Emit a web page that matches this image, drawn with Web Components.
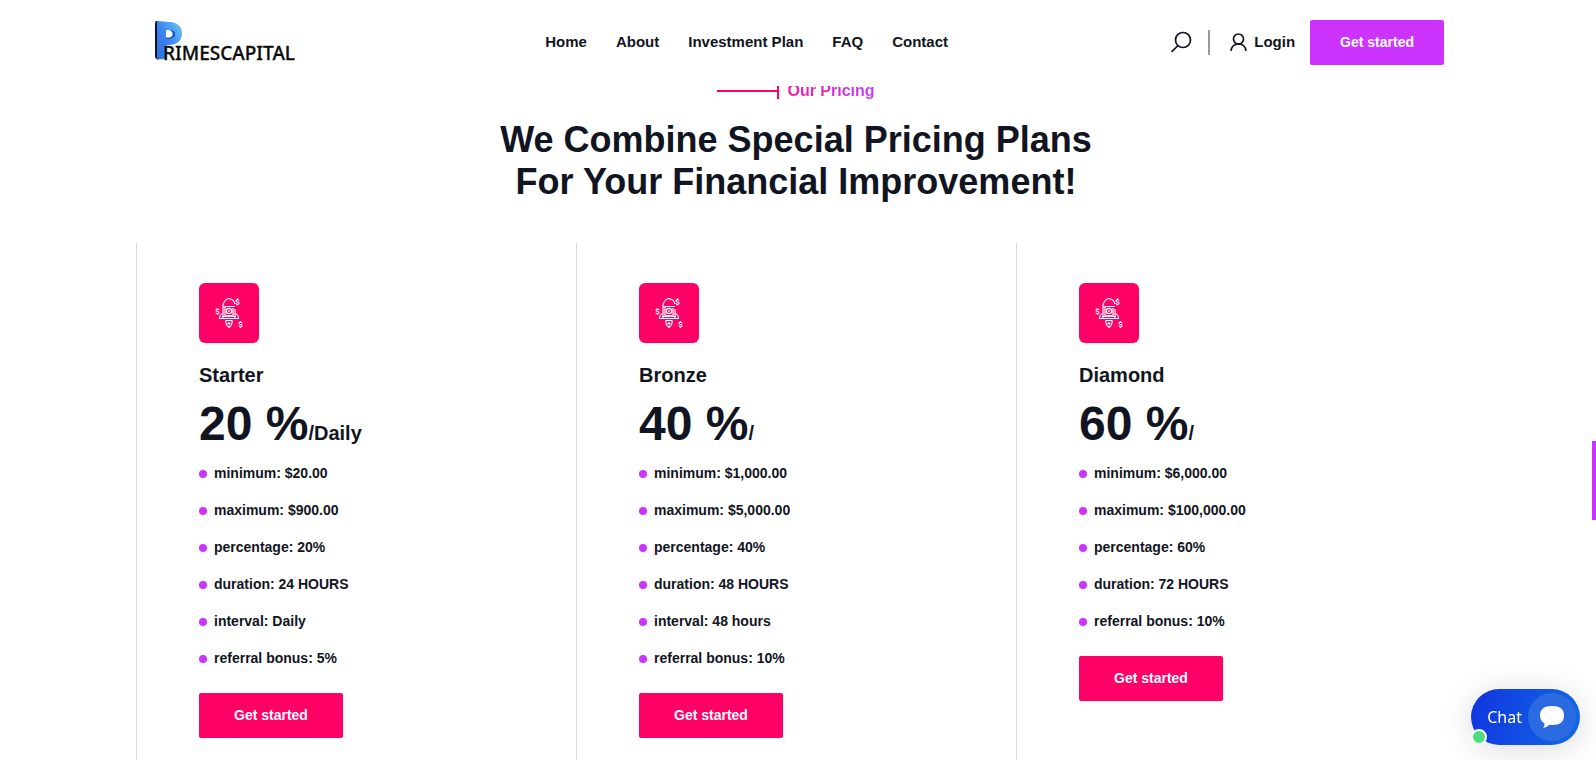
<!DOCTYPE html>
<html lang="en">
<head>
<meta charset="utf-8">
<title>PrimesCapital</title>
<style>
  :root {
    --ink: #111522;
    --pink: #ff0066;
    --purple: #cc33ff;
    --rule: #d9d9d9;
  }
  html { scrollbar-width: none; }
  body {
    margin: 0;
    padding-right: 4px;
    background: #fff;
    color: var(--ink);
    font: 700 14px/21px "Liberation Sans", Arial, sans-serif;
  }
</style>
</head>
<body>
<site-header></site-header>
<main>
  <pricing-section>
    <span slot="label">Our Pricing</span>
    <span slot="title">We Combine Special Pricing Plans<br>For Your Financial Improvement!</span>
    <pricing-card name="Starter" rate="20 %" period="/Daily">
      <plan-feature>minimum: $20.00</plan-feature>
      <plan-feature>maximum: $900.00</plan-feature>
      <plan-feature>percentage: 20%</plan-feature>
      <plan-feature>duration: 24 HOURS</plan-feature>
      <plan-feature>interval: Daily</plan-feature>
      <plan-feature>referral bonus: 5%</plan-feature>
    </pricing-card>
    <pricing-card name="Bronze" rate="40 %" period="/">
      <plan-feature>minimum: $1,000.00</plan-feature>
      <plan-feature>maximum: $5,000.00</plan-feature>
      <plan-feature>percentage: 40%</plan-feature>
      <plan-feature>duration: 48 HOURS</plan-feature>
      <plan-feature>interval: 48 hours</plan-feature>
      <plan-feature>referral bonus: 10%</plan-feature>
    </pricing-card>
    <pricing-card name="Diamond" rate="60 %" period="/">
      <plan-feature>minimum: $6,000.00</plan-feature>
      <plan-feature>maximum: $100,000.00</plan-feature>
      <plan-feature>percentage: 60%</plan-feature>
      <plan-feature>duration: 72 HOURS</plan-feature>
      <plan-feature>referral bonus: 10%</plan-feature>
    </pricing-card>
  </pricing-section>
</main>
<chat-launcher>Chat</chat-launcher>
<scroll-thumb></scroll-thumb>

<script>
  function define(name, markup, setup) {
    const template = document.createElement("template");
    template.innerHTML = markup;
    customElements.define(name, class extends HTMLElement {
      constructor() {
        super();
        this.attachShadow({ mode: "open" }).append(template.content.cloneNode(true));
      }
      connectedCallback() { if (setup) setup(this, this.shadowRoot); }
    });
  }

  define("action-button", `
    <style>
      :host { display: inline-block; }
      button {
        display: block; height: 45px; padding: 0 var(--button-pad, 35px); border: 0; border-radius: 2px;
        background: var(--button-color, var(--pink)); color: #fff;
        font: inherit; font-size: 14px; line-height: 21px; cursor: pointer; white-space: nowrap;
      }
    </style>
    <button type="button"><slot></slot></button>`);

  define("site-logo", `
    <style>
      :host { display: block; width: 174px; }
      a { display: block; }
      svg { display: block; width: 174px; height: 50px; }
      .word { font: 500 19px "Noto Sans", sans-serif; fill: #0b0b0b; stroke: #0b0b0b; stroke-width: .3px; }
    </style>
    <a href="#" aria-label="PrimesCapital">
      <svg viewBox="0 0 174 50">
        <defs>
          <linearGradient id="blue" x1="0" y1="1" x2="1" y2="0">
            <stop offset="0" stop-color="#2a6fdc"/>
            <stop offset=".5" stop-color="#3e86f3"/>
            <stop offset="1" stop-color="#69cdfb"/>
          </linearGradient>
        </defs>
        <path d="M8 4h3v38l-2 .5Q7 42 7 39V7Q7 5 8 4z" fill="#0b1320"/>
        <path d="M9 4L22 5C29 5.500 34 9.500 34 16C34 24 29 28 20 28L18 28V42L9 42.500ZM18 13V22C24 22.500 27.500 21 27.500 17.500S24 12.500 18 13Z" fill="url(#blue)" fill-rule="evenodd"/>
        <path d="M21 13C25 12.500 27.500 14 27.500 17.500S24 22.500 18 22V20.500C22 21 24.500 20 24.500 17C24.500 15 23 13.500 21 13Z" fill="#1c5fc4"/>
        <text class="word" x="15" y="43">RIMESCAPITAL</text>
      </svg>
    </a>`);

  define("site-header", `
    <style>
      :host { position: fixed; inset: 0 0 auto 0; z-index: 5; display: block; padding-right: 4px; background: #fff; }
      .bar {
        box-sizing: border-box; max-width: 1320px; min-height: 86px; margin: 0 auto; padding: 0 12px 2px;
        display: flex; align-items: center; justify-content: space-between;
      }
      nav { display: flex; gap: 29px; }
      a { color: inherit; text-decoration: none; font-size: 15px; line-height: 24px; }
      .tools { display: flex; align-items: center; }
      .search { display: block; padding: 0; border: 0; background: none; color: inherit; }
      svg { display: block; fill: none; stroke: currentColor; stroke-width: 1.7; }
      .divider { width: 2px; height: 25px; margin: 0 20px 0 16px; background: #999; }
      .login { display: flex; align-items: center; gap: 7px; margin-right: 15px; }
      action-button { --button-color: var(--purple); --button-pad: 30px; }
    </style>
    <header class="bar">
      <site-logo></site-logo>
      <nav>
        <a href="#">Home</a><a href="#">About</a><a href="#">Investment Plan</a><a href="#">FAQ</a><a href="#">Contact</a>
      </nav>
      <div class="tools">
        <button class="search" type="button" aria-label="Search">
          <svg width="21" height="22" viewBox="0 0 21 22"><circle cx="12" cy="9" r="7.500"/><path d="M7 14.500L.5 21"/></svg>
        </button>
        <span class="divider"></span>
        <a class="login" href="#">
          <svg width="17" height="18" viewBox="0 0 17 18"><circle cx="8.500" cy="6" r="5"/><path d="M1 18C1.500 13.500 4 11 8.500 11S15.500 13.500 16 18"/></svg>
          Login
        </a>
        <action-button>Get started</action-button>
      </div>
    </header>`);

  define("pricing-section", `
    <style>
      :host { display: block; max-width: 1320px; margin: 0 auto; padding-top: 79px; }
      .label { display: flex; align-items: center; justify-content: center; gap: 8px; margin: 0 0 16px; font-size: 16px; line-height: 24px; }
      .line { display: flex; align-items: center; width: 62px; }
      .line::before { content: ""; flex: 1; height: 2px; background: var(--pink); }
      .line::after { content: ""; width: 2px; height: 16px; background: var(--pink); }
      .text { background: linear-gradient(90deg, #f61fa0, #c23bff); -webkit-background-clip: text; background-clip: text; color: transparent; }
      h2 { margin: 0 0 40px; font-size: 36px; line-height: 42px; text-align: center; }
      .plans { display: grid; grid-template-columns: repeat(3, 1fr); }
    </style>
    <p class="label"><span class="line"></span><span class="text"><slot name="label"></slot></span></p>
    <h2><slot name="title"></slot></h2>
    <div class="plans"><slot></slot></div>`);

  define("rocket-icon", `
    <style>
      :host { display: flex; align-items: center; justify-content: center; width: 60px; height: 60px; border-radius: 6px; background: var(--pink); }
      svg { display: block; fill: none; stroke: #fff; stroke-width: 1.2; }
    </style>
    <svg width="30" height="32" viewBox="0 0 30 32" aria-hidden="true">
      <defs>
        <path id="coin" d="M1.500-1.200Q1.400-2.400 0-2.400T-1.500-1.200Q-1.500 0 0 0T1.500 1.200Q1.400 2.400 0 2.400T-1.500 1.200M0-3.500V-2.400M0 2.400V3.500"/>
      </defs>
      <path d="M9 21V8.500Q10 2.500 15 1.500Q20 2.500 21 7M21 12V21M9 9.500H21M11 10V18.500H19V11"/>
      <circle cx="15" cy="14" r="2.700"/><path d="M15 13V15"/>
      <path d="M9 16.500Q5.500 17.500 5.500 21.500H24.500Q24.500 17.500 21 16.500M8 19.500H22"/>
      <path d="M12 23.500Q11 27 15 30.500Q19 27 18 23.500ZM15 25V28M13.500 26.500H16.500"/>
      <use href="#coin" x="23.500" y="5"/><use href="#coin" x="3.500" y="14.500"/><use href="#coin" x="26.500" y="27.500"/>
    </svg>`);

  define("plan-feature", `
    <style>
      :host { display: flex; align-items: center; gap: 7px; }
      :host::before { content: ""; width: 8px; height: 8px; border-radius: 50%; background: var(--purple); }
    </style>
    <span><slot></slot></span>`, host => host.setAttribute("role", "listitem"));

  define("pricing-card", `
    <style>
      :host { display: block; padding: 40px 20px 40px 62px; border-left: 1px solid var(--rule); }
      h3 { margin: 20px 0 8px; font-size: 20px; line-height: 24px; }
      .price { margin: 0 0 10px; font-size: 48px; line-height: 58px; }
      .period { font-size: 20px; line-height: 24px; }
      .features { display: grid; gap: 16px; margin-bottom: 24px; }
    </style>
    <rocket-icon></rocket-icon>
    <h3></h3>
    <p class="price"><span class="rate"></span><span class="period"></span></p>
    <div class="features" role="list"><slot></slot></div>
    <action-button>Get started</action-button>`, (host, root) => {
      root.querySelector("h3").textContent = host.getAttribute("name");
      root.querySelector(".rate").textContent = host.getAttribute("rate");
      root.querySelector(".period").textContent = host.getAttribute("period");
    });

  define("chat-launcher", `
    <style>
      :host { position: fixed; right: 16px; bottom: 15px; z-index: 6; display: block; }
      button {
        display: flex; align-items: center; gap: 6px; height: 56px; padding: 0 4px 0 16px;
        border: 0; border-radius: 28px; background: linear-gradient(100deg, #1135df, #1169e6);
        box-shadow: 0 4px 32px rgba(0, 0, 0, .15); color: #fff; font: 400 16px/24px "Noto Sans", sans-serif;
      }
      .bubble { display: flex; align-items: center; justify-content: center; width: 48px; height: 48px; border-radius: 50%; background: #2c6ae1; }
      .status { position: absolute; left: 0; bottom: 0; width: 12px; height: 12px; border: 2px solid #fff; border-radius: 50%; background: #4ade80; }
      svg { display: block; }
    </style>
    <button type="button">
      <slot></slot>
      <span class="bubble">
        <svg width="24" height="22" viewBox="0 0 24 22"><path d="M12 0C20 0 24 3 24 9.500S20 19 12 19H9Q6 22 3 22Q5 20 4.500 17.500Q0 15 0 9.500C0 3 4 0 12 0Z" fill="#fff"/></svg>
      </span>
    </button>
    <span class="status"></span>`);

  define("scroll-thumb", `
    <style>
      :host { position: fixed; top: 58%; right: 0; z-index: 7; display: block; width: 4px; height: 79px; background: var(--purple); }
    </style>`);
</script>
</body>
</html>
